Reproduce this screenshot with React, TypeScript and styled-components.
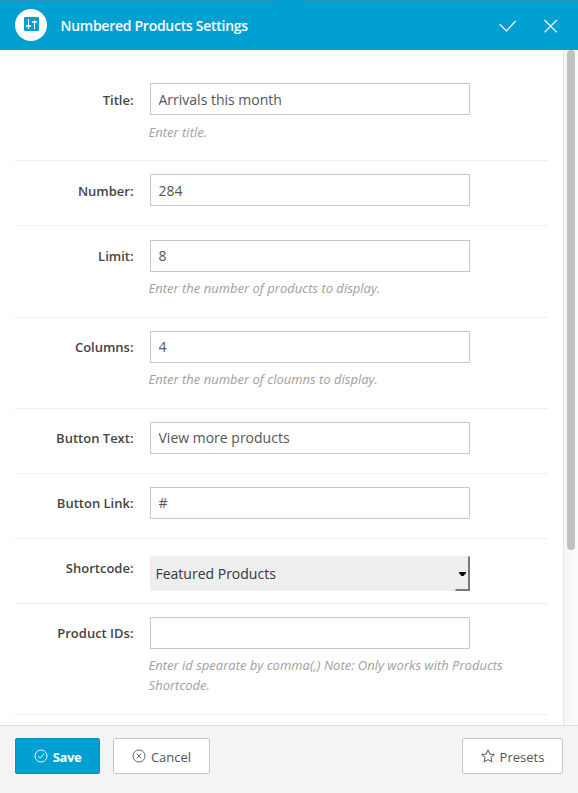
import React from "react";
import styled, { createGlobalStyle } from "styled-components";

const GlobalStyle = createGlobalStyle`
  * { box-sizing: border-box; }
  body { margin: 0; font-family: "Open Sans", sans-serif; background: #fff; }
  button, input { font-family: inherit; }
`;

const Panel = styled.div`
  display: flex;
  flex-direction: column;
  width: 578px;
  height: 793px;
  overflow: hidden;
  background: #fff;
`;

const Header = styled.header`
  display: flex;
  align-items: center;
  flex: 0 0 50px;
  padding: 0 20px 0 15px;
  background:
    linear-gradient(#2d91b6, #2d91b6) 0 0 / 276px 1px no-repeat,
    linear-gradient(#2d91b6, #2d91b6) 100% 0 / 275px 1px no-repeat,
    #00a0d2;
  color: #fff;
`;

const Badge = styled.span`
  display: flex;
  align-items: center;
  justify-content: center;
  width: 32px;
  height: 32px;
  border-radius: 50%;
  background: #fff;
`;

const Title = styled.h1`
  flex: 1;
  margin: 2px 0 0 13.5px;
  font-size: 14px;
  font-weight: 600;
  letter-spacing: -0.27px;
  line-height: 20px;
`;

const HeaderActions = styled.div`
  display: flex;
  align-items: center;
  gap: 27px;
  margin-top: 2px;
  svg { display: block; }
`;

const Body = styled.div`
  display: flex;
  flex: 0 0 675px;
  min-height: 0;
`;

const Form = styled.div`
  flex: 1;
  padding: 20px 15px 0;
  overflow: hidden;
`;

const Track = styled.div`
  width: 15px;
  padding: 0 3px;
  border-left: 1px solid #e6e6e6;
  background: linear-gradient(90deg, #f5f5f5, #fbfbfb);
`;

const Thumb = styled.div`
  width: 8px;
  height: 500px;
  border-radius: 4px;
  background: #c1c1c1;
`;

const Row = styled.div<{ $height: number; $top?: number }>`
  display: grid;
  grid-template-columns: 118.500px 358px;
  column-gap: 16.500px;
  align-content: start;
  height: ${(p) => p.$height}px;
  padding-top: ${(p) => p.$top ?? 13}px;
  border-bottom: 1px solid #eee;
`;

const Label = styled.label<{ $top: number }>`
  padding-top: ${(p) => p.$top}px;
  color: #444;
  font-size: 13px;
  font-weight: 600;
  line-height: 20px;
  text-align: right;
`;

const TextInput = styled.input<{ $tight?: boolean }>`
  display: block;
  width: 320px;
  height: 32px;
  padding: 0 8px ${(p) => (p.$tight ? 2 : 0)}px 7.5px;
  border: 1px solid #c9c9c9;
  border-radius: 0;
  outline: none;
  background: #fff;
  color: #555;
  font-size: 14px;
`;

const Help = styled.p<{ $tight?: boolean }>`
  margin: ${(p) => (p.$tight ? 6 : 7)}px 0 0 -1.4px;
  color: #a0a0a0;
  font-size: 13px;
  font-style: italic;
  line-height: 20px;
`;

const SelectBox = styled.div`
  display: flex;
  align-items: stretch;
  justify-content: space-between;
  width: 320px;
  height: 35px;
  padding-left: 5.5px;
  background: #eee;
  color: #32373c;
  font-size: 14px;
  line-height: 36px;
`;

const SelectArrow = styled.span`
  display: flex;
  align-items: center;
  justify-content: center;
  width: 15px;
  padding: 1px 0 0 1px;
  border: solid #777;
  border-width: 1px 2px 2px 1px;
  border-top-color: #eee;
  border-left-color: #eee;
`;

const Footer = styled.footer`
  display: flex;
  align-items: flex-start;
  flex: 0 0 68px;
  gap: 13px;
  padding: 12px 15px 0;
  border-top: 1px solid #dedede;
  background: #f4f4f4;
`;

const Button = styled.button<{ $primary?: boolean; $width: number; $end?: boolean }>`
  display: flex;
  align-items: center;
  justify-content: center;
  gap: 5px;
  width: ${(p) => p.$width}px;
  height: 36px;
  margin: 0 0 0 ${(p) => (p.$end ? "auto" : "0")};
  padding: 1px 0 0;
  border: 1px solid ${(p) => (p.$primary ? "#0092c3" : "#c6c6c6")};
  border-radius: 2px;
  background: ${(p) => (p.$primary ? "#00a0d2" : "#fff")};
  color: ${(p) => (p.$primary ? "#fff" : "#555")};
  font-size: 13px;
  font-weight: ${(p) => (p.$primary ? 700 : 400)};
  letter-spacing: ${(p) => (p.$primary ? "-0.4px" : "normal")};
  svg { display: block; margin-top: -2px; }
`;

type Field = {
  label: string;
  height: number;
  top?: number;
  tight?: boolean;
  value?: string;
  select?: boolean;
  help?: string;
};

const fields: Field[] = [
  { label: "Title:", value: "Arrivals this month", help: "Enter title.", height: 91 },
  { label: "Number:", value: "284", height: 65 },
  { label: "Limit:", value: "8", help: "Enter the number of products to display.", height: 92, top: 14, tight: true },
  { label: "Columns:", value: "4", help: "Enter the number of cloumns to display.", height: 91, tight: true },
  { label: "Button Text:", value: "View more products", height: 65, tight: true },
  { label: "Button Link:", value: "#", height: 65, tight: true },
  { label: "Shortcode:", value: "Featured Products", select: true, height: 65, top: 17 },
  {
    label: "Product IDs:",
    value: "",
    help: "Enter id spearate by comma(,) Note: Only works with Products Shortcode.",
    height: 111,
    tight: true,
  },
];

const labelTop = (f: Field) => (f.select ? 2 : f.tight ? 6 : 7);

const SlidersIcon = () => (
  <svg width="16" height="16" viewBox="0 0 16 16">
    <rect x="1" y="0" width="15" height="14" rx="1" fill="#00a0d2" />
    <path d="M5.500 2v10M11.500 3.500V12" stroke="#fff" strokeWidth="1" fill="none" />
    <path d="M3 9h5M9 5h5" stroke="#fff" strokeWidth="1.400" fill="none" />
  </svg>
);

const line = { fill: "none", stroke: "currentColor" };

export default function App() {
  return (
    <>
      <GlobalStyle />
      <Panel>
        <Header>
          <Badge><SlidersIcon /></Badge>
          <Title>Numbered Products Settings</Title>
          <HeaderActions>
            <svg width="18" height="14" viewBox="0 0 18 14" {...line} strokeWidth="1.15"><path d="M.5 5.200 7.500 12 16.500 2" /></svg>
            <svg width="14" height="14" viewBox="0 0 14 14" {...line} strokeWidth="1.15"><path d="M.5 1l12.400 12.400M12.900 1 .5 13.400" /></svg>
          </HeaderActions>
        </Header>
        <Body>
          <Form>
            {fields.map((f) => (
              <Row key={f.label} $height={f.height} $top={f.top}>
                <Label $top={labelTop(f)}>{f.label}</Label>
                <div>
                  {f.select ? (
                    <SelectBox>
                      {f.value}
                      <SelectArrow>
                        <svg width="7" height="4" viewBox="0 0 7 4"><path d="M0 0h7v1L4.500 4h-2L0 1z" fill="#000" /></svg>
                      </SelectArrow>
                    </SelectBox>
                  ) : (
                    <TextInput aria-label={f.label} defaultValue={f.value} $tight={f.tight} />
                  )}
                  {f.help && <Help $tight={f.tight}>{f.help}</Help>}
                </div>
              </Row>
            ))}
          </Form>
          <Track><Thumb /></Track>
        </Body>
        <Footer>
          <Button $primary $width={85}>
            <svg width="14" height="14" viewBox="0 0 14 14" {...line} strokeWidth="0.9"><circle cx="7" cy="7" r="6" /><path d="M4 7.2l2.2 2L10 4.9" /></svg>
            Save
          </Button>
          <Button $width={97}>
            <svg width="14" height="14" viewBox="0 0 14 14" {...line} strokeWidth="0.9"><circle cx="7" cy="7" r="6" /><path d="M4.7 4.7l4.6 4.6M9.3 4.7 4.7 9.3" /></svg>
            Cancel
          </Button>
          <Button $width={101} $end>
            <svg width="14" height="14" viewBox="0 0 14 14" {...line} strokeWidth="1"><path d="M7 .9l1.8 4.2 4.6.4-3.5 3 1.1 4.5L7 10.6 3 13l1.1-4.5-3.5-3 4.6-.4z" /></svg>
            Presets
          </Button>
        </Footer>
      </Panel>
    </>
  );
}
